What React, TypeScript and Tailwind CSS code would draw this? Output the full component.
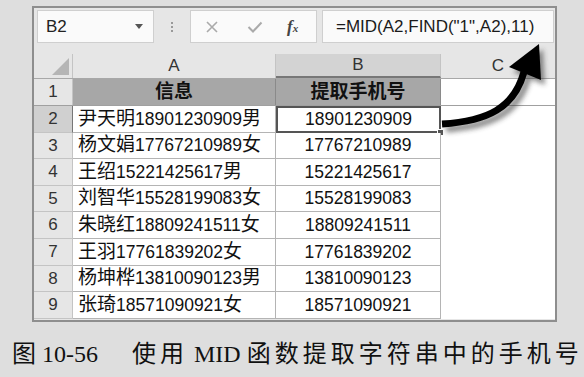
import React from 'react';

const rows: string[][] = [
  ['尹天明18901230909男', '18901230909'],
  ['杨文娟17767210989女', '17767210989'],
  ['王绍15221425617男', '15221425617'],
  ['刘智华15528199083女', '15528199083'],
  ['朱晓红18809241511女', '18809241511'],
  ['王羽17761839202女', '17761839202'],
  ['杨坤桦13810090123男', '13810090123'],
  ['张琦18571090921女', '18571090921'],
];

const cellFont = { fontFamily: '"Liberation Sans", "Noto Sans CJK SC", sans-serif' };

// CJK glyphs in the sheet are drawn a bit larger than the digits
const Mixed: React.FC<{ text: string }> = ({ text }) => {
  const parts = text.match(/[\u4e00-\u9fff]+|[^\u4e00-\u9fff]+/g) || [];
  return (
    <>
      {parts.map((p, i) =>
        /[\u4e00-\u9fff]/.test(p) ? (
          <span key={i} className="text-[19px]">{p}</span>
        ) : (
          <span key={i}>{p}</span>
        )
      )}
    </>
  );
};

const App: React.FC = () => {
  return (
    <div className="w-[584px] h-[377px] bg-[#dedede] relative overflow-hidden" style={cellFont}>
      <div className="pl-[32px] pt-[6px]">
        {/* Excel frame */}
        <div className="w-[525px] h-[316px] border-2 border-[#8e8e8e] bg-[#e6e6e6] flex flex-col">
          {/* Formula bar */}
          <div className="h-[46px] flex items-start pt-[2px] pl-[3px]">
            <div className="w-[117px] h-[33px] bg-[#fafafa] border border-[#cfcfcf] flex items-center justify-between px-[8px]">
              <span className="text-[17px] text-[#222]">B2</span>
              <span className="w-0 h-0 border-l-[4px] border-r-[4px] border-t-[5px] border-l-transparent border-r-transparent border-t-[#555] mr-[2px]"></span>
            </div>
            <div className="w-[36px] h-[33px] flex flex-col items-center justify-center gap-[2px]">
              <span className="w-[2px] h-[2px] bg-[#999]"></span>
              <span className="w-[2px] h-[2px] bg-[#999]"></span>
              <span className="w-[2px] h-[2px] bg-[#999]"></span>
            </div>
            <div className="w-[127px] h-[33px] bg-[#fafafa] border border-[#cfcfcf] flex items-center pl-[14px]">
              <svg width="14" height="14" viewBox="0 0 14 14" className="mr-[28px]">
                <path d="M2 2 L12 12 M12 2 L2 12" stroke="#aaa" strokeWidth="1.6" fill="none" />
              </svg>
              <svg width="16" height="14" viewBox="0 0 16 14" className="mr-[24px]">
                <path d="M1.5 7 L6 11.5 L14.5 2.5" stroke="#aaa" strokeWidth="2" fill="none" />
              </svg>
              <span className="text-[17px] italic font-bold text-[#444]" style={{ fontFamily: '"Liberation Serif", serif' }}>
                f<span className="text-[11px]">x</span>
              </span>
            </div>
            <div className="ml-[5px] w-[232px] h-[33px] bg-[#fafafa] border border-[#cfcfcf] flex items-center pl-[13px]">
              <span className="text-[17px] text-[#1a1a1a] whitespace-nowrap">=MID(A2,FIND("1",A2),11)</span>
            </div>
          </div>

          {/* Column headers */}
          <div className="h-[25px] flex border-b border-[#a8a8a8]">
            <div className="w-[39px] h-full border-r border-[#c4c4c4] flex items-end justify-end pr-[3px] pb-[3px]">
              <span className="w-0 h-0 border-l-[17px] border-b-[17px] border-l-transparent border-b-[#b5b5b5]"></span>
            </div>
            <div className="w-[203px] h-full border-r border-[#c4c4c4] flex items-center justify-center text-[17px] text-[#333]">A</div>
            <div className="w-[165px] h-full bg-[#d3d3d3] border-b-2 border-[#777] border-r border-r-[#c4c4c4] flex items-center justify-center text-[17px] text-[#333]">B</div>
            <div className="flex-1 h-full flex items-center justify-center text-[17px] text-[#333]">C</div>
          </div>

          {/* Row 1 */}
          <div className="h-[27px] flex border-b border-[#a0a0a0]">
            <div className="w-[39px] h-full border-r border-[#c4c4c4] flex items-center justify-center text-[17px] text-[#333]">1</div>
            <div className="w-[203px] h-full bg-[#a7a7a7] border-r border-[#8a8a8a] flex items-center justify-center text-[19px] font-bold text-[#111]">信息</div>
            <div className="w-[165px] h-full bg-[#a7a7a7] border-r border-[#8a8a8a] flex items-center justify-center text-[19px] font-bold text-[#111]">提取手机号</div>
            <div className="flex-1 h-full bg-white"></div>
          </div>

          {/* Data rows */}
          {rows.map((r, i) => (
            <div key={i} className="h-[26.6px] flex">
              <div
                className={`w-[39px] h-full border-r border-b flex items-center justify-center text-[17px] text-[#333] ${
                  i === 0 ? 'bg-[#d0d0d0] border-r-[#777] border-b-[#c4c4c4]' : 'border-[#c4c4c4]'
                }`}
              >
                {i + 2}
              </div>
              <div className="w-[203px] h-full bg-white border-r border-b border-[#b4b4b4] flex items-center pl-[5px] text-[17.5px] text-[#111] whitespace-nowrap">
                <Mixed text={r[0]} />
              </div>
              <div
                className={`w-[165px] h-full bg-white flex items-center justify-center text-[17.5px] text-[#111] relative ${
                  i === 0 ? 'border-2 border-[#555]' : 'border-r border-b border-[#b4b4b4]'
                }`}
              >
                {r[1]}
                {i === 0 && <span className="absolute right-[-5px] bottom-[-5px] w-[7px] h-[7px] bg-[#555] border border-white"></span>}
              </div>
              <div className="flex-1 h-full bg-white"></div>
            </div>
          ))}
        </div>
      </div>

      {/* Caption */}
      <div
        className="absolute left-[12px] top-[339px] text-[24px] leading-[30px] text-[#111] whitespace-nowrap"
        style={{ fontFamily: '"Liberation Serif", "Noto Sans CJK SC", serif' }}
      >
        图 10-56<span className="inline-block w-[34px]"></span>
        <span className="tracking-[4px]">使用</span> MID <span className="tracking-[4px]">函数提取字符串中的手机号</span>
      </div>

      {/* Arrow overlay */}
      <svg className="absolute left-0 top-0 pointer-events-none" width="584" height="377" viewBox="0 0 584 377">
        <defs>
          <filter id="sh" x="-20%" y="-20%" width="140%" height="140%">
            <feGaussianBlur stdDeviation="2.5" />
          </filter>
        </defs>
        <g transform="translate(4,5)" filter="url(#sh)" opacity="0.55">
          <path d="M442 124 C 488 121 514 108 524 72" stroke="#333" strokeWidth="7" fill="none" />
          <path d="M539 44 L509 67 L541 80 Z" fill="#333" />
        </g>
        <path d="M442 124 C 488 121 514 108 524 72" stroke="#000" strokeWidth="7" fill="none" />
        <path d="M539 44 L509 67 L541 80 Z" fill="#000" />
      </svg>
    </div>
  );
};

export default App;
